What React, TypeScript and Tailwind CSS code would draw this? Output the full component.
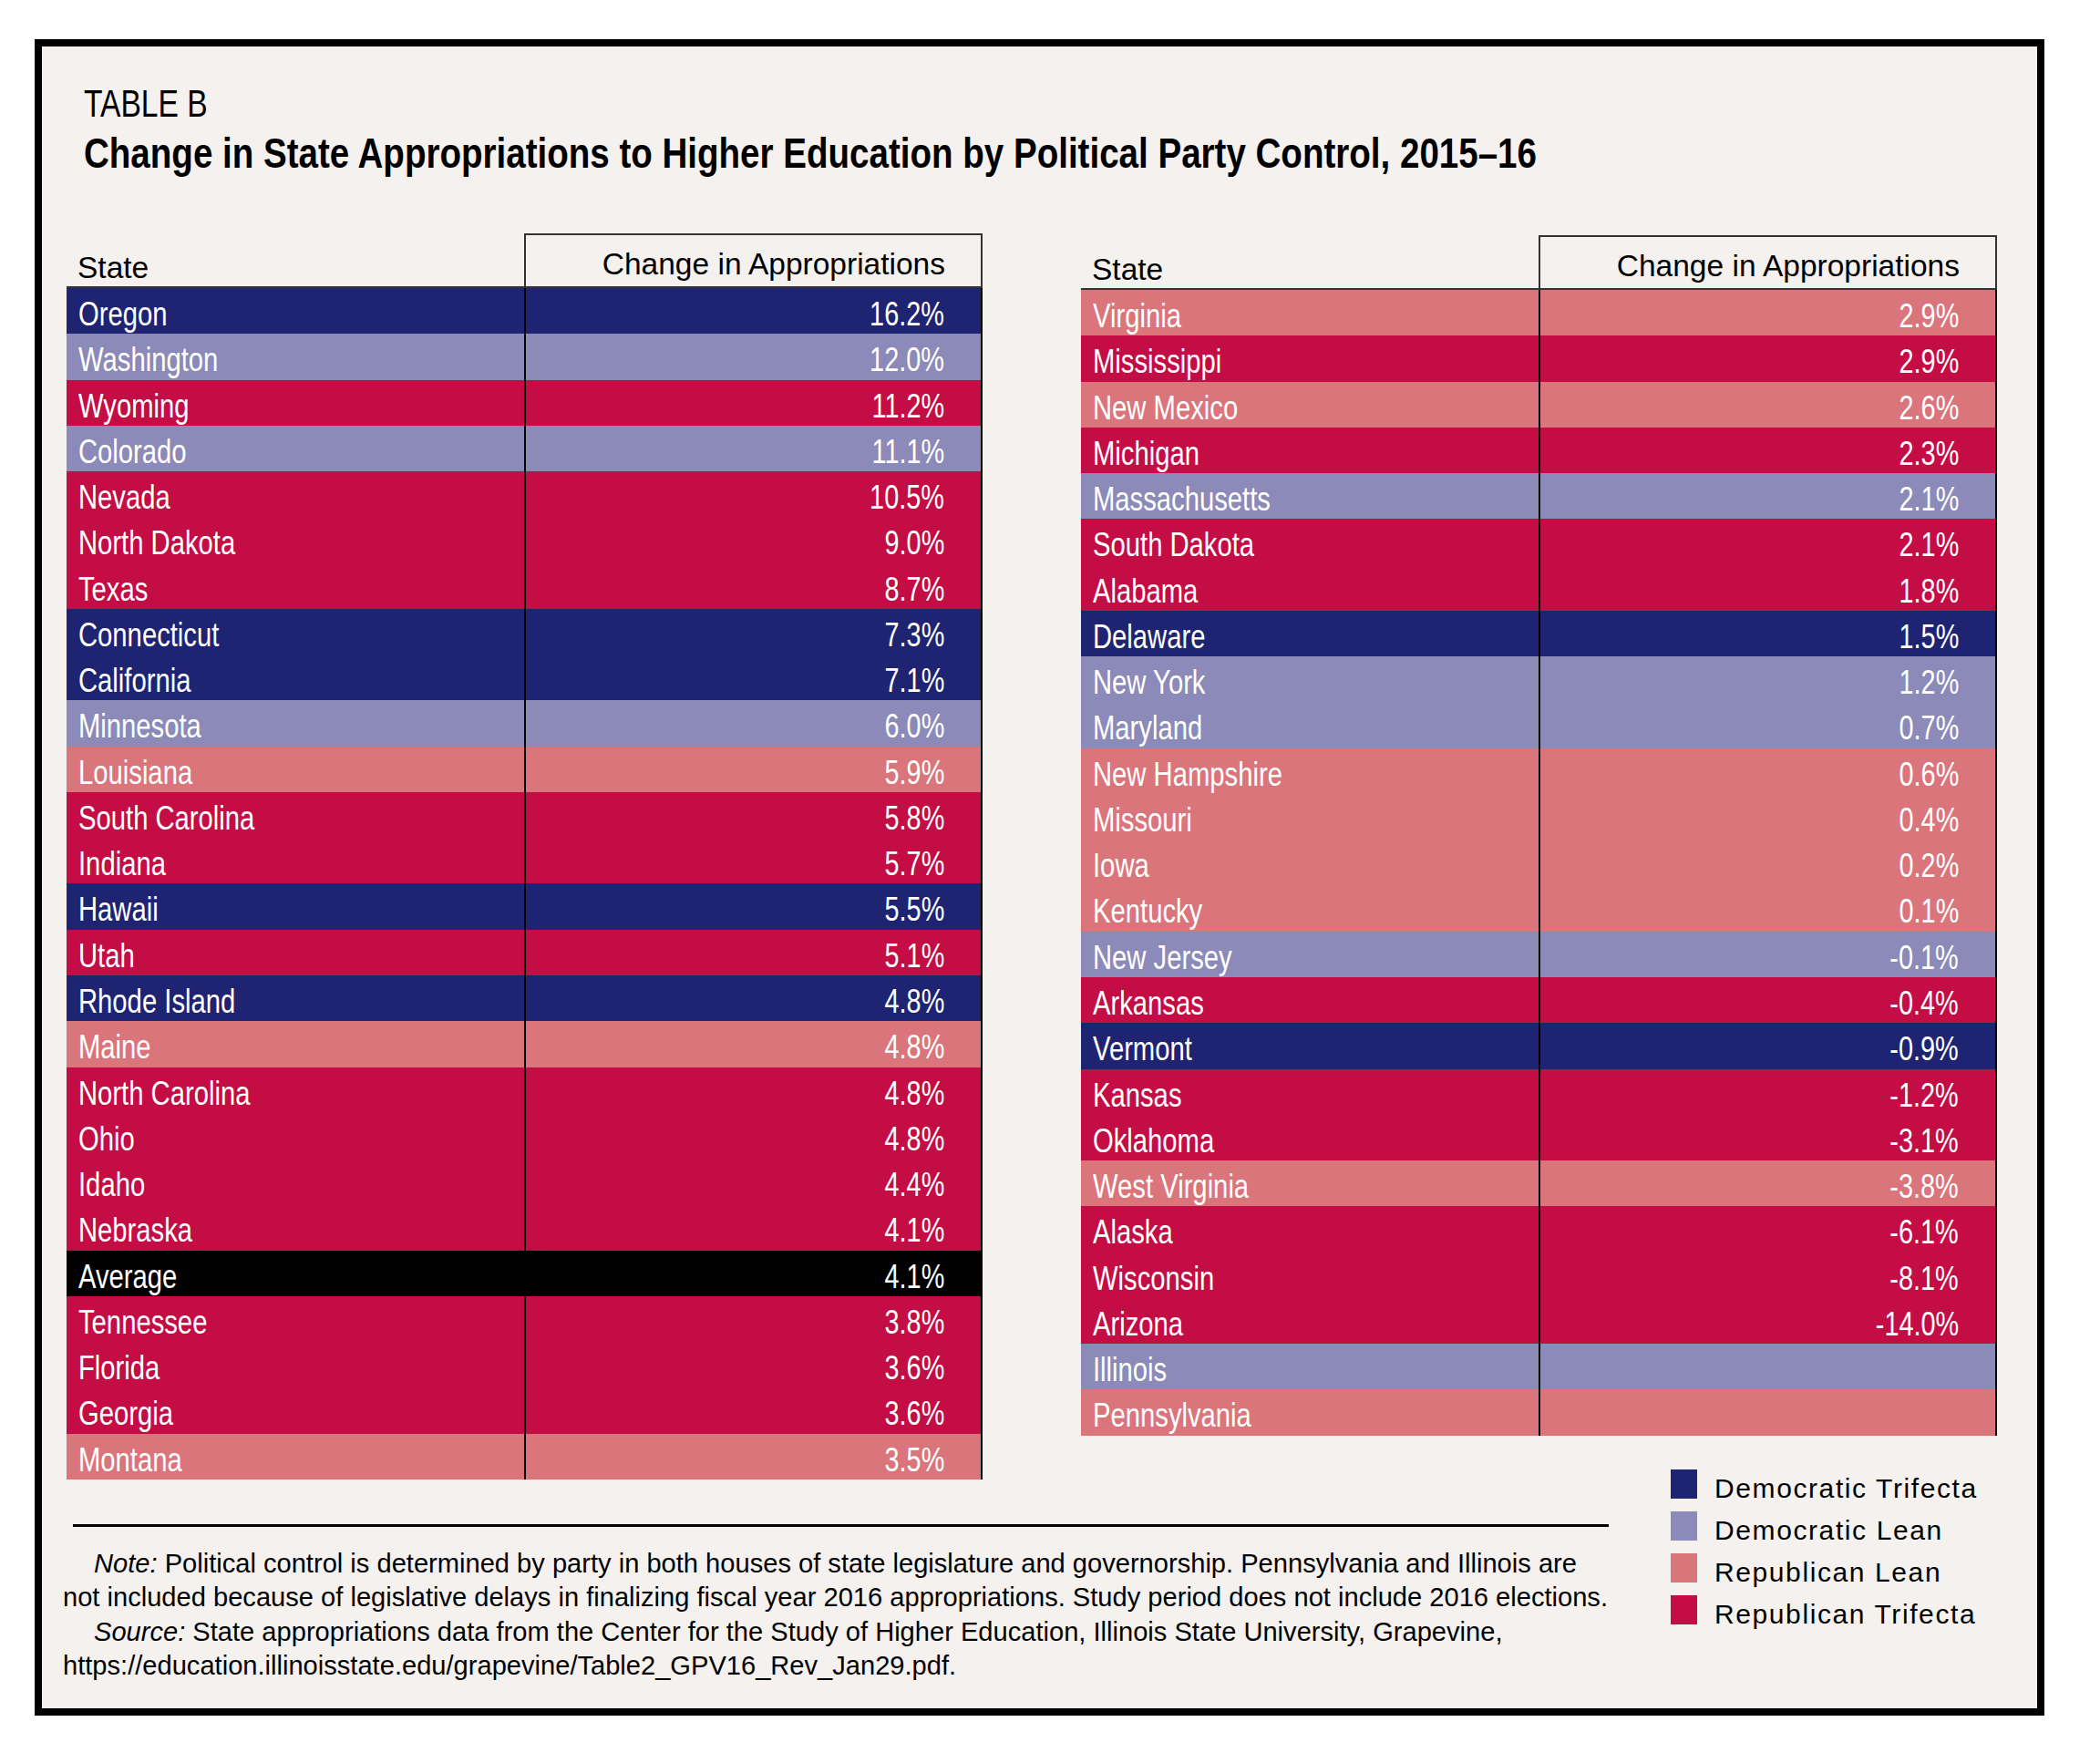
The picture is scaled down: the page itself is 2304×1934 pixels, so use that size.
import React from "react";

type Party = "DT" | "DL" | "RL" | "RT" | "AVG";

const BG: Record<Party, string> = {
  DT: "bg-[#1e2472]",
  DL: "bg-[#8b8ab8]",
  RL: "bg-[#da757b]",
  RT: "bg-[#c40c45]",
  AVG: "bg-black",
};

const left: [string, Party, string][] = [
  ["Oregon", "DT", "16.2%"],
  ["Washington", "DL", "12.0%"],
  ["Wyoming", "RT", "11.2%"],
  ["Colorado", "DL", "11.1%"],
  ["Nevada", "RT", "10.5%"],
  ["North Dakota", "RT", "9.0%"],
  ["Texas", "RT", "8.7%"],
  ["Connecticut", "DT", "7.3%"],
  ["California", "DT", "7.1%"],
  ["Minnesota", "DL", "6.0%"],
  ["Louisiana", "RL", "5.9%"],
  ["South Carolina", "RT", "5.8%"],
  ["Indiana", "RT", "5.7%"],
  ["Hawaii", "DT", "5.5%"],
  ["Utah", "RT", "5.1%"],
  ["Rhode Island", "DT", "4.8%"],
  ["Maine", "RL", "4.8%"],
  ["North Carolina", "RT", "4.8%"],
  ["Ohio", "RT", "4.8%"],
  ["Idaho", "RT", "4.4%"],
  ["Nebraska", "RT", "4.1%"],
  ["Average", "AVG", "4.1%"],
  ["Tennessee", "RT", "3.8%"],
  ["Florida", "RT", "3.6%"],
  ["Georgia", "RT", "3.6%"],
  ["Montana", "RL", "3.5%"],
];

const right: [string, Party, string][] = [
  ["Virginia", "RL", "2.9%"],
  ["Mississippi", "RT", "2.9%"],
  ["New Mexico", "RL", "2.6%"],
  ["Michigan", "RT", "2.3%"],
  ["Massachusetts", "DL", "2.1%"],
  ["South Dakota", "RT", "2.1%"],
  ["Alabama", "RT", "1.8%"],
  ["Delaware", "DT", "1.5%"],
  ["New York", "DL", "1.2%"],
  ["Maryland", "DL", "0.7%"],
  ["New Hampshire", "RL", "0.6%"],
  ["Missouri", "RL", "0.4%"],
  ["Iowa", "RL", "0.2%"],
  ["Kentucky", "RL", "0.1%"],
  ["New Jersey", "DL", "-0.1%"],
  ["Arkansas", "RT", "-0.4%"],
  ["Vermont", "DT", "-0.9%"],
  ["Kansas", "RT", "-1.2%"],
  ["Oklahoma", "RT", "-3.1%"],
  ["West Virginia", "RL", "-3.8%"],
  ["Alaska", "RT", "-6.1%"],
  ["Wisconsin", "RT", "-8.1%"],
  ["Arizona", "RT", "-14.0%"],
  ["Illinois", "DL", ""],
  ["Pennsylvania", "RL", ""],
];

function Table({ rows }: { rows: [string, Party, string][] }) {
  return (
    <div className="flex w-[1005px] flex-col">
      <div className="flex h-[60px] font-['Liberation_Sans',sans-serif] text-[33.5px] text-black">
        <div className="flex w-[502px] items-end border-b-2 border-[#333] pb-[4px] pl-[12px] leading-[33.5px]">
          State
        </div>
        <div className="flex flex-1 items-end justify-end border-2 border-[#333] pb-[8px] pr-[39px] leading-[33.5px]">
          Change in Appropriations
        </div>
      </div>
      {rows.map(([name, p, val]) => (
        <div
          key={name}
          className={`flex h-[50.27px] font-['Liberation_Sans',sans-serif] text-[37px] text-white ${BG[p]}`}
        >
          <div className="w-[502px] whitespace-nowrap pl-[13px] pt-[8px] leading-[42px]">
            <span className="inline-block origin-left scale-x-[0.79]">{name}</span>
          </div>
          <div className="flex-1 whitespace-nowrap border-x-2 border-black pr-[40px] pt-[8px] text-right leading-[42px]">
            <span className="inline-block origin-right scale-x-[0.78]">{val}</span>
          </div>
        </div>
      ))}
    </div>
  );
}

const legend: [Party, string][] = [
  ["DT", "Democratic Trifecta"],
  ["DL", "Democratic Lean"],
  ["RL", "Republican Lean"],
  ["RT", "Republican Trifecta"],
];

export default function App() {
  return (
    <div className="min-h-[1934px] w-[2304px] bg-white pl-[38px] pt-[43px]">
      <div className="flex h-[1839px] w-[2205px] flex-col border-8 border-black bg-[#f4f1ee]">
        <div className="ml-[46px] mt-[38px] whitespace-nowrap font-['Liberation_Sans',sans-serif] text-[42px] leading-[50px] text-black">
          <span className="inline-block origin-left scale-x-[0.8]">TABLE B</span>
        </div>
        <div className="ml-[46px] mt-[1px] whitespace-nowrap font-['Liberation_Sans',sans-serif] text-[47px] font-bold leading-[55px] text-black">
          <span className="inline-block origin-left scale-x-[0.82]">
            Change in State Appropriations to Higher Education by Political Party Control, 2015–16
          </span>
        </div>

        <div className="ml-[27px] mt-[61px] flex items-start gap-[108px]">
          <Table rows={left} />
          <div className="mt-[2px]">
            <Table rows={right} />
          </div>
        </div>

        <div className="mt-[-11px] flex items-start">
          <div className="ml-[23px] w-[1697px] pt-[60px]">
            <div className="ml-[11px] h-[3px] w-[1685px] bg-black" />
            <div className="mt-[22px] font-['Liberation_Sans',sans-serif] text-[29.1px] leading-[37.4px] text-black">
              <p className="indent-[34px]">
                <i>Note:</i> Political control is determined by party in both houses of state legislature and governorship. Pennsylvania and Illinois are
                <br />
                not included because of legislative delays in finalizing fiscal year 2016 appropriations. Study period does not include 2016 elections.
              </p>
              <p className="indent-[34px]">
                <i>Source:</i> State appropriations data from the Center for the Study of Higher Education, Illinois State University, Grapevine,
                <br />
                https://education.illinoisstate.edu/grapevine/Table2_GPV16_Rev_Jan29.pdf.
              </p>
            </div>
          </div>
          <div className="ml-[67px] flex flex-col gap-[5px]">
            {legend.map(([p, label]) => (
              <div key={label} className="flex items-start">
                <div className={`h-[32px] w-[29px] ${BG[p]}`} />
                <div className="ml-[19px] whitespace-nowrap font-['Liberation_Sans',sans-serif] text-[30px] leading-[41px] tracking-[1.6px] text-black">
                  {label}
                </div>
              </div>
            ))}
          </div>
        </div>
      </div>
    </div>
  );
}
